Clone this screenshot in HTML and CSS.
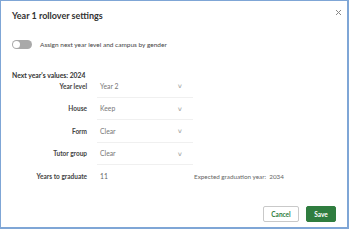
FILE: index.html
```html
<!DOCTYPE html>
<html lang="en">
<head>
    <meta charset="UTF-8">
    <title>Year 1 rollover settings</title>
    <link rel="stylesheet" href="styles.css">
</head>
<body>
    <div class="dialog">
        <div class="header">
            <h1>Year 1 rollover settings</h1>
            <svg class="close" width="7" height="7" viewBox="0 0 7 7">
                <path d="M1 1L6 6M6 1L1 6" stroke="#888" stroke-width="1" fill="none"/>
            </svg>
        </div>

        <div class="toggle-row">
            <span class="toggle"><span class="knob"></span></span>
            <span class="toggle-label">Assign next year level and campus by gender</span>
        </div>

        <div class="section-title">Next year's values: 2024</div>

        <div class="form">
            <label>Year level</label>
            <div class="select"><span>Year 2</span><span class="chev">&#x2228;</span></div>

            <label>House</label>
            <div class="select"><span>Keep</span><span class="chev">&#x2228;</span></div>

            <label>Form</label>
            <div class="select"><span>Clear</span><span class="chev">&#x2228;</span></div>

            <label>Tutor group</label>
            <div class="select"><span>Clear</span><span class="chev">&#x2228;</span></div>

            <label>Years to graduate</label>
            <div class="years">
                <span class="num">11</span>
                <span class="expected">Expected graduation year: &nbsp;2034</span>
            </div>
        </div>

        <div class="footer">
            <button class="btn cancel">Cancel</button>
            <button class="btn save">Save</button>
        </div>
    </div>
</body>
</html>
```

FILE: styles.css
```css
body {
    margin: 0;
    font-family: Lato, "Open Sans", sans-serif;
    color: #333;
    background: #fff;
}
.dialog {
    box-sizing: border-box;
    width: 349px;
    height: 229px;
    border: 1px solid #7fa6d6;
    border-right-width: 2px;
    border-bottom-width: 2px;
    padding: 0 11px;
    display: flex;
    flex-direction: column;
}
.header {
    display: flex;
    justify-content: space-between;
    align-items: flex-start;
    padding-top: 9px;
}
h1 {
    margin: 0;
    font-size: 9px;
    line-height: 12px;
    font-weight: 700;
    color: #333;
}
.close {
    margin-top: -1px;
    margin-right: -6px;
}
.toggle-row {
    display: flex;
    align-items: center;
    gap: 8px;
    margin-top: 18px;
    color: #444;
}
.toggle-label {
    font-size: 6.5px;
}
.toggle {
    width: 20px;
    height: 9px;
    border-radius: 5px;
    background: #a9a9a9;
    display: flex;
    align-items: center;
    padding: 0 1px;
    box-sizing: border-box;
}
.knob {
    width: 7px;
    height: 7px;
    border-radius: 50%;
    background: #fff;
}
.section-title {
    margin-top: 22px;
    font-size: 6.8px;
    font-weight: 700;
    color: #333;
}
.form {
    display: grid;
    grid-template-columns: 75px 1fr;
    grid-auto-rows: 22.5px;
    column-gap: 10px;
    margin-top: -4px;
    font-size: 6.5px;
    align-items: center;
}
.form label {
    text-align: right;
    font-weight: 700;
    color: #444;
}
.select {
    width: 96px;
    height: 22.5px;
    box-sizing: border-box;
    display: flex;
    align-items: center;
    justify-content: space-between;
    padding: 0 11px 0 3px;
    font-size: 6.8px;
    color: #777;
    border-bottom: 1px solid #f0f0f0;
}
.chev {
    font-size: 6px;
    color: #aaa;
    transform: scaleX(1.3);
}
.years {
    display: flex;
    align-items: center;
    color: #666;
    padding-left: 3px;
}
.num {
    width: 94px;
    font-size: 6.8px;
}
.expected {
    color: #666;
    font-size: 6.3px;
}
.footer {
    margin-top: auto;
    margin-bottom: 5px;
    display: flex;
    justify-content: flex-end;
    gap: 7px;
}
.btn {
    font-family: Lato, "Open Sans", sans-serif;
    font-size: 6.5px;
    font-weight: 700;
    height: 16px;
    border-radius: 2px;
    padding: 0;
}
.cancel {
    width: 36px;
    background: #fff;
    border: 1px solid #c9c9c9;
    color: #2e7d3e;
}
.save {
    width: 30px;
    background: #2f7d3f;
    border: 1px solid #2f7d3f;
    color: #fff;
}
```
